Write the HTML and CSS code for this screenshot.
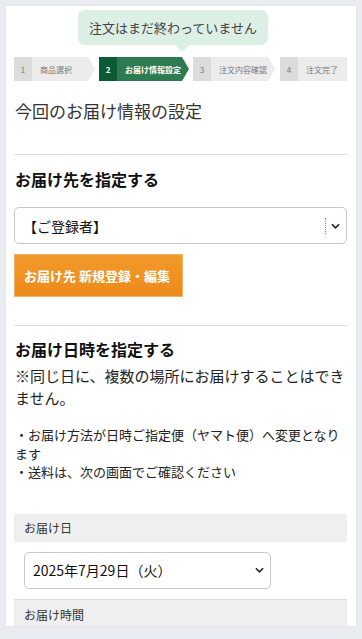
FILE: index.html
```html
<!DOCTYPE html>
<html lang="ja">
<head>
<meta charset="utf-8">
<link rel="stylesheet" href="styles.css">
</head>
<body>
<div class="card">
  <div class="tip-row"><div class="tip">注文はまだ終わっていません</div></div>
  <div class="steps">
    <div class="step s1"><span class="num">1</span><span class="label">商品選択</span></div>
    <div class="step s2 active"><span class="num">2</span><span class="label">お届け情報設定</span></div>
    <div class="step s3"><span class="num">3</span><span class="label">注文内容確認</span></div>
    <div class="step s4 last"><span class="num">4</span><span class="label">注文完了</span></div>
  </div>
  <h1 class="title">今回のお届け情報の設定</h1>
  <hr class="rule">
  <h2 class="sec">お届け先を指定する</h2>
  <div class="select wide"><span>【ご登録者】</span><span class="sep"></span><svg class="chev" viewBox="0 0 10 6" width="9" height="6"><path d="M1 1l4 4 4-4" fill="none" stroke="#222" stroke-width="1.8"/></svg></div>
  <div class="btn">お届け先 新規登録・編集</div>
  <hr class="rule rule2">
  <h2 class="sec sec2">お届け日時を指定する</h2>
  <p class="note">※同じ日に、複数の場所にお届けすることはできません。</p>
  <p class="list">・お届け方法が日時ご指定便（ヤマト便）へ変更となります<br>・送料は、次の画面でご確認ください</p>
  <div class="bar">お届け日</div>
  <div class="bar-body"><div class="select date"><span>2025年7月29日（火）</span><svg class="chev" viewBox="0 0 10 6" width="9" height="6"><path d="M1 1l4 4 4-4" fill="none" stroke="#222" stroke-width="1.8"/></svg></div></div>
  <div class="bar bar-time">お届け時間</div>
</div>
</body>
</html>
```
FILE: styles.css
```css
* { box-sizing: border-box; }
html, body { margin: 0; padding: 0; }
body {
  background: #e9ecf0;
  font-family: "Noto Sans CJK JP", "Noto Sans", sans-serif;
  color: #222;
  height: 639px;
  overflow: hidden;
  padding: 5px 5px 0 5px;
}
.card {
  width: 352px;
  height: 622px;
  background: #fff;
  border: 1px solid #e2e5e9;
  padding: 4px 9px 0 8px;
  overflow: hidden;
}
.tip-row { display: flex; padding-left: 64px; }
.tip {
  position: relative;
  width: 190px;
  height: 35px;
  background: #dcefe5;
  border-radius: 7px;
  color: #444;
  font-size: 13px;
  display: flex;
  align-items: center;
  justify-content: center;
}
.tip::after {
  content: "";
  position: absolute;
  left: 97px;
  bottom: -7px;
  border-left: 7px solid transparent;
  border-right: 7px solid transparent;
  border-top: 7px solid #dcefe5;
}
.steps { display: flex; gap: 4px; margin-top: 12px; height: 24px; }
.step {
  display: flex;
  height: 24px;
  clip-path: polygon(0 0, calc(100% - 7px) 0, 100% 50%, calc(100% - 7px) 100%, 0 100%);
  background: #ececec;
  color: #777;
  font-size: 8px;
}
.step .num {
  width: 18px;
  flex: none;
  background: #dcdcdc;
  display: flex; align-items: center; justify-content: center;
}
.step .label { display: flex; align-items: center; padding-left: 8px; white-space: nowrap; }
.s1 { width: 81px; }
.s2 { width: 90px; }
.s3 { width: 82px; }
.s4 { width: 67px; margin-left: 1px; }
.step.last { clip-path: none; }
.step.active { background: #2d7b50; color: #fff; font-weight: bold; }
.step.active .num { background: #0d5b35; }
.title {
  font-family: "DejaVu Serif", "Noto Sans CJK JP", serif;
  font-weight: normal;
  font-size: 17px;
  color: #333;
  margin: 19px 0 0 1px;
  line-height: 24px;
}
.rule { border: 0; border-top: 1px solid #e0e0e0; margin: 30px 0 0 0; }
.sec { font-size: 16px; font-weight: bold; margin: 13px 0 0 1px; line-height: 22px; color: #111; }
.select {
  display: flex;
  align-items: center;
  border: 1px solid #c8c8c8;
  border-radius: 5px;
  height: 37px;
  font-size: 14px;
  color: #111;
  padding: 0 6px 0 8px;
  background: #fff;
}
.select span:first-child { flex: 1; }
.wide { margin-top: 17px; }
.sep { width: 0; height: 16px; border-left: 1px dotted #888; margin-right: 5px; flex: none; }
.chev { flex: none; }
.btn {
  width: 169px;
  height: 43px;
  margin-top: 10px;
  background: linear-gradient(#f39a2a, #ec8a1b);
  border: 1px solid #f0b066;
  color: #fff;
  font-weight: bold;
  font-size: 13px;
  display: flex;
  align-items: center;
  padding-left: 9px;
}
.rule2 { margin-top: 28px; }
.sec2 { margin-top: 12px; }
.note { font-size: 15px; line-height: 22px; margin: 5px 0 0 1px; color: #222; }
.list { font-size: 13px; line-height: 18.5px; margin: 17px 0 0 1px; color: #222; }
.bar {
  background: #efefef;
  height: 28px;
  font-size: 12px;
  color: #333;
  display: flex;
  align-items: center;
  padding-left: 10px;
  margin-top: 32px;
}
.bar-body { padding: 10px 0 10px 10px; }
.date { width: 247px; }
.bar-time { margin-top: 0; border-top: 1px solid #ddd; height: 30px; }
```
